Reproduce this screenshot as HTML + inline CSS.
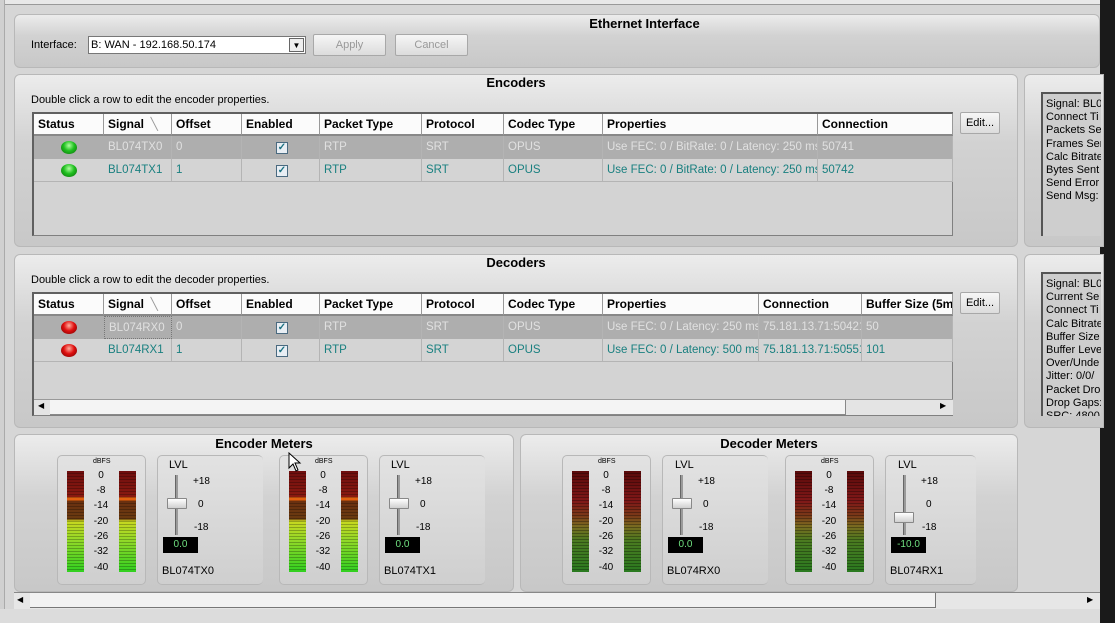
<!DOCTYPE html>
<html><head><meta charset="utf-8"><style>
*{box-sizing:border-box;margin:0;padding:0}
body{width:1115px;height:623px;overflow:hidden;background:#d6d6d6;font-family:"Liberation Sans",sans-serif;font-size:11px;color:#000;position:relative}
.a{position:absolute}
.panel{position:absolute;border:1px solid #b8b8b8;border-radius:6px;background:linear-gradient(#ececec,#d2d2d2 40%,#c8c8c8)}
.title{position:absolute;font-weight:bold;font-size:13px;left:0;right:0;text-align:center}
.btn{position:absolute;border:1px solid #a8a8a8;border-radius:2px;background:linear-gradient(#f6f6f6,#dcdcdc);text-align:center;line-height:20px;font-size:11px}
.tbl{position:absolute;border:1px solid #808080;border-top:2px solid #606060;border-left:2px solid #606060;background:#d3d3d3}
.hd{position:absolute;top:0;height:22px;background:#fbfbfb;border-right:1px solid #999;border-bottom:2px solid #888;font-weight:bold;font-size:12px;line-height:21px;padding-left:4px;white-space:nowrap;overflow:hidden}
.c{position:absolute;height:23px;line-height:22px;padding-left:4px;border-right:1px solid #b4b4b4;white-space:nowrap;overflow:hidden;font-size:11.5px}
.r0{background:#aeaeae;color:#e0e0e0}
.r1{background:#d4d4d4;color:#1a8080;border-bottom:1px solid #b4b4b4}
.led{position:absolute;width:16px;height:13px;border-radius:50%}
.g{background:radial-gradient(circle at 50% 35%,#b0ffa0,#20c020 45%,#0a6a0a)}
.rd{background:radial-gradient(circle at 50% 35%,#ffb0a0,#e01010 45%,#700000)}
.chk{position:absolute;width:12px;height:12px;border:1px solid #4a6a80;background:#e8eef4;color:#1a7080;font-size:10px;line-height:10px;text-align:center;font-weight:bold}
.mbox{position:absolute;border:1px solid #b8b8b8;border-radius:5px;background:linear-gradient(#e2e2e2,#cfcfcf)}
.bar{position:absolute;width:17px;height:101px}
.enc{background:repeating-linear-gradient(#0000 0 2px,rgba(0,0,0,.25) 2px 3px),linear-gradient(#6e0e0e 0,#8a1a10 26px,#e06010 26px,#e06010 30px,#6a3010 30px,#6a3a10 48px,#c8d820 50px,#90d828 70px,#30d020 101px)}
.dec{background:repeating-linear-gradient(#0000 0 2px,rgba(0,0,0,.3) 2px 3px),linear-gradient(#5a0a0a 0,#801818 30px,#7a3a18 45px,#7a6a20 55px,#4a7a20 70px,#2a7a20 101px)}
.sc{position:absolute;font-size:10px;width:30px;text-align:center}
.sm{position:absolute;font-size:10px}
.lv{position:absolute;font-size:11px}
.trk{position:absolute;width:3px;height:60px;background:#9a9a9a;border-left:1px solid #666}
.th{position:absolute;width:20px;height:11px;background:linear-gradient(#fff,#d0d0d0);border:1px solid #888;border-radius:1px}
.disp{position:absolute;width:35px;height:16px;background:#000;color:#6fe07f;font-size:10px;text-align:center;line-height:16px}
.info{position:absolute;width:60px;height:144px;background:#cecece;border-left:2px solid #555;border-top:2px solid #555;font-size:11px;line-height:13.2px;padding:4px 0 0 3px;white-space:nowrap;overflow:hidden}
</style></head><body>
<div class="a" style="left:0;top:0;width:1115px;height:5px;background:#e8e8e8;border-bottom:1px solid #999"></div>
<div class="a" style="left:0;top:0;width:5px;height:623px;background:#d0d0d0;border-right:1px solid #aaa"></div>
<div class="a" style="left:1100px;top:0;width:15px;height:623px;background:#1a1a1a"></div>

<div class="panel" style="left:14px;top:14px;width:1086px;height:54px">
<div class="title" style="top:1px;padding-left:175px">Ethernet Interface</div>
<div class="a" style="left:16px;top:24px">Interface:</div>
<div class="a" style="left:73px;top:21px;width:218px;height:18px;background:#fff;border:1px solid #777;padding-left:2px;line-height:16px">B: WAN - 192.168.50.174</div>
<div class="a" style="left:274px;top:23px;width:15px;height:14px;border:1px solid #666;background:#eee;font-size:8px;text-align:center;line-height:13px">▼</div>
<div class="btn" style="left:298px;top:19px;width:73px;height:22px;color:#999">Apply</div>
<div class="btn" style="left:380px;top:19px;width:73px;height:22px;color:#999">Cancel</div>
</div>

<div class="panel" style="left:14px;top:74px;width:1004px;height:173px">
<div class="title" style="top:0">Encoders</div>
<div class="a" style="left:16px;top:19px">Double click a row to edit the encoder properties.</div>
<div class="btn" style="left:945px;top:37px;width:40px;height:22px">Edit...</div>
</div>
<div class="tbl" style="left:32px;top:112px;width:921px;height:124px">
<div class="hd" style="left:0;width:70px">Status</div><div class="hd" style="left:70px;width:68px">Signal <span style="color:#999;font-weight:normal">&nbsp;╲</span></div><div class="hd" style="left:138px;width:70px">Offset</div><div class="hd" style="left:208px;width:78px">Enabled</div><div class="hd" style="left:286px;width:102px">Packet Type</div><div class="hd" style="left:388px;width:82px">Protocol</div><div class="hd" style="left:470px;width:99px">Codec Type</div><div class="hd" style="left:569px;width:215px">Properties</div><div class="hd" style="left:784px;width:135px">Connection</div>
<div class="a r0" style="left:0;top:22px;width:919px;height:23px"></div>
<div class="a r1" style="left:0;top:45px;width:919px;height:23px"></div>
<div class="led g" style="left:27px;top:27px"></div><div class="led g" style="left:27px;top:50px"></div>
<div class="c r0" style="left:70px;top:22px;width:68px">BL074TX0</div><div class="c r0" style="left:138px;top:22px;width:70px">0</div><div class="c r0" style="left:208px;top:22px;width:78px"></div><div class="c r0" style="left:286px;top:22px;width:102px">RTP</div><div class="c r0" style="left:388px;top:22px;width:82px">SRT</div><div class="c r0" style="left:470px;top:22px;width:99px">OPUS</div><div class="c r0" style="left:569px;top:22px;width:215px">Use FEC: 0 / BitRate: 0 / Latency: 250 ms</div><div class="c r0" style="left:784px;top:22px;width:135px">50741</div>
<div class="c r1" style="left:70px;top:45px;width:68px">BL074TX1</div><div class="c r1" style="left:138px;top:45px;width:70px">1</div><div class="c r1" style="left:208px;top:45px;width:78px"></div><div class="c r1" style="left:286px;top:45px;width:102px">RTP</div><div class="c r1" style="left:388px;top:45px;width:82px">SRT</div><div class="c r1" style="left:470px;top:45px;width:99px">OPUS</div><div class="c r1" style="left:569px;top:45px;width:215px">Use FEC: 0 / BitRate: 0 / Latency: 250 ms</div><div class="c r1" style="left:784px;top:45px;width:135px">50742</div>
<div class="chk" style="left:242px;top:28px">✓</div><div class="chk" style="left:242px;top:51px">✓</div>
</div>
<div class="panel" style="left:1024px;top:74px;width:80px;height:173px;border-radius:6px 0 0 6px"></div>
<div class="info" style="left:1041px;top:92px">Signal: BL0<br>Connect Ti<br>Packets Se<br>Frames Ser<br>Calc Bitrate<br>Bytes Sent<br>Send Error<br>Send Msg:</div>

<div class="panel" style="left:14px;top:254px;width:1004px;height:174px">
<div class="title" style="top:0">Decoders</div>
<div class="a" style="left:16px;top:19px">Double click a row to edit the decoder properties.</div>
<div class="btn" style="left:945px;top:37px;width:40px;height:22px">Edit...</div>
</div>
<div class="tbl" style="left:32px;top:292px;width:921px;height:124px">
<div class="hd" style="left:0;width:70px">Status</div><div class="hd" style="left:70px;width:68px">Signal <span style="color:#999;font-weight:normal">&nbsp;╲</span></div><div class="hd" style="left:138px;width:70px">Offset</div><div class="hd" style="left:208px;width:78px">Enabled</div><div class="hd" style="left:286px;width:102px">Packet Type</div><div class="hd" style="left:388px;width:82px">Protocol</div><div class="hd" style="left:470px;width:99px">Codec Type</div><div class="hd" style="left:569px;width:156px">Properties</div><div class="hd" style="left:725px;width:103px">Connection</div><div class="hd" style="left:828px;width:91px">Buffer Size (5ms)</div>
<div class="a r0" style="left:0;top:22px;width:919px;height:23px"></div>
<div class="a r1" style="left:0;top:45px;width:919px;height:23px"></div>
<div class="led rd" style="left:27px;top:27px"></div><div class="led rd" style="left:27px;top:50px"></div>
<div class="c r0" style="left:70px;top:22px;width:68px;border:1px dotted #777">BL074RX0</div><div class="c r0" style="left:138px;top:22px;width:70px">0</div><div class="c r0" style="left:208px;top:22px;width:78px"></div><div class="c r0" style="left:286px;top:22px;width:102px">RTP</div><div class="c r0" style="left:388px;top:22px;width:82px">SRT</div><div class="c r0" style="left:470px;top:22px;width:99px">OPUS</div><div class="c r0" style="left:569px;top:22px;width:156px">Use FEC: 0 / Latency: 250 ms</div><div class="c r0" style="left:725px;top:22px;width:103px">75.181.13.71:50421</div><div class="c r0" style="left:828px;top:22px;width:91px">50</div>
<div class="c r1" style="left:70px;top:45px;width:68px">BL074RX1</div><div class="c r1" style="left:138px;top:45px;width:70px">1</div><div class="c r1" style="left:208px;top:45px;width:78px"></div><div class="c r1" style="left:286px;top:45px;width:102px">RTP</div><div class="c r1" style="left:388px;top:45px;width:82px">SRT</div><div class="c r1" style="left:470px;top:45px;width:99px">OPUS</div><div class="c r1" style="left:569px;top:45px;width:156px">Use FEC: 0 / Latency: 500 ms</div><div class="c r1" style="left:725px;top:45px;width:103px">75.181.13.71:50551</div><div class="c r1" style="left:828px;top:45px;width:91px">101</div>
<div class="chk" style="left:242px;top:28px">✓</div><div class="chk" style="left:242px;top:51px">✓</div>
<div class="a" style="left:0;top:105px;width:919px;height:16px;background:#e4e4e4;border-top:1px solid #999"></div>
<div class="a" style="left:16px;top:106px;width:796px;height:15px;background:#f4f4f4;border-right:1px solid #888;border-bottom:1px solid #888"></div>
<div class="a" style="left:4px;top:107px;font-size:8px">◀</div><div class="a" style="left:906px;top:107px;font-size:8px">▶</div>
</div>
<div class="panel" style="left:1024px;top:254px;width:80px;height:174px;border-radius:6px 0 0 6px"></div>
<div class="info" style="left:1041px;top:272px">Signal: BL0<br>Current Se<br>Connect Ti<br>Calc Bitrate<br>Buffer Size<br>Buffer Leve<br>Over/Unde<br>Jitter: 0/0/<br>Packet Dro<br>Drop Gaps:<br>SRC: 4800</div>

<div class="panel" style="left:14px;top:434px;width:500px;height:158px"><div class="title" style="top:1px">Encoder Meters</div></div>
<div class="panel" style="left:520px;top:434px;width:498px;height:158px"><div class="title" style="top:1px">Decoder Meters</div></div>

<div class="mbox" style="left:57px;top:455px;width:89px;height:130px"></div>
<div class="bar enc" style="left:67px;top:471px"></div><div class="bar enc" style="left:119px;top:471px"></div>
<div class="sm" style="left:93px;top:458px;font-size:7px">dBFS</div>
<div class="sc" style="left:86px;top:470px">0</div><div class="sc" style="left:86px;top:485px">-8</div><div class="sc" style="left:86px;top:500px">-14</div><div class="sc" style="left:86px;top:516px">-20</div><div class="sc" style="left:86px;top:531px">-26</div><div class="sc" style="left:86px;top:546px">-32</div><div class="sc" style="left:86px;top:562px">-40</div>
<div class="mbox" style="left:157px;top:455px;width:106px;height:130px;border-right:none"></div>
<div class="lv" style="left:169px;top:459px">LVL</div>
<div class="trk" style="left:175px;top:475px"></div><div class="th" style="left:167px;top:498px"></div>
<div class="sm" style="left:193px;top:476px">+18</div><div class="sm" style="left:198px;top:499px">0</div><div class="sm" style="left:194px;top:522px">-18</div>
<div class="disp" style="left:163px;top:537px">0.0</div>
<div class="lv" style="left:162px;top:565px">BL074TX0</div>

<div class="mbox" style="left:279px;top:455px;width:89px;height:130px"></div>
<div class="bar enc" style="left:289px;top:471px"></div><div class="bar enc" style="left:341px;top:471px"></div>
<div class="sm" style="left:315px;top:458px;font-size:7px">dBFS</div>
<div class="sc" style="left:308px;top:470px">0</div><div class="sc" style="left:308px;top:485px">-8</div><div class="sc" style="left:308px;top:500px">-14</div><div class="sc" style="left:308px;top:516px">-20</div><div class="sc" style="left:308px;top:531px">-26</div><div class="sc" style="left:308px;top:546px">-32</div><div class="sc" style="left:308px;top:562px">-40</div>
<div class="mbox" style="left:379px;top:455px;width:106px;height:130px;border-right:none"></div>
<div class="lv" style="left:391px;top:459px">LVL</div>
<div class="trk" style="left:397px;top:475px"></div><div class="th" style="left:389px;top:498px"></div>
<div class="sm" style="left:415px;top:476px">+18</div><div class="sm" style="left:420px;top:499px">0</div><div class="sm" style="left:416px;top:522px">-18</div>
<div class="disp" style="left:385px;top:537px">0.0</div>
<div class="lv" style="left:384px;top:565px">BL074TX1</div>

<div class="mbox" style="left:562px;top:455px;width:89px;height:130px"></div>
<div class="bar dec" style="left:572px;top:471px"></div><div class="bar dec" style="left:624px;top:471px"></div>
<div class="sm" style="left:598px;top:458px;font-size:7px">dBFS</div>
<div class="sc" style="left:591px;top:470px">0</div><div class="sc" style="left:591px;top:485px">-8</div><div class="sc" style="left:591px;top:500px">-14</div><div class="sc" style="left:591px;top:516px">-20</div><div class="sc" style="left:591px;top:531px">-26</div><div class="sc" style="left:591px;top:546px">-32</div><div class="sc" style="left:591px;top:562px">-40</div>
<div class="mbox" style="left:662px;top:455px;width:106px;height:130px;border-right:none"></div>
<div class="lv" style="left:675px;top:459px">LVL</div>
<div class="trk" style="left:680px;top:475px"></div><div class="th" style="left:672px;top:498px"></div>
<div class="sm" style="left:698px;top:476px">+18</div><div class="sm" style="left:703px;top:499px">0</div><div class="sm" style="left:699px;top:522px">-18</div>
<div class="disp" style="left:668px;top:537px">0.0</div>
<div class="lv" style="left:667px;top:565px">BL074RX0</div>

<div class="mbox" style="left:785px;top:455px;width:89px;height:130px"></div>
<div class="bar dec" style="left:795px;top:471px"></div><div class="bar dec" style="left:847px;top:471px"></div>
<div class="sm" style="left:821px;top:458px;font-size:7px">dBFS</div>
<div class="sc" style="left:814px;top:470px">0</div><div class="sc" style="left:814px;top:485px">-8</div><div class="sc" style="left:814px;top:500px">-14</div><div class="sc" style="left:814px;top:516px">-20</div><div class="sc" style="left:814px;top:531px">-26</div><div class="sc" style="left:814px;top:546px">-32</div><div class="sc" style="left:814px;top:562px">-40</div>
<div class="mbox" style="left:885px;top:455px;width:91px;height:130px;border-right:none"></div>
<div class="lv" style="left:898px;top:459px">LVL</div>
<div class="trk" style="left:903px;top:475px"></div><div class="th" style="left:894px;top:512px"></div>
<div class="sm" style="left:921px;top:476px">+18</div><div class="sm" style="left:926px;top:499px">0</div><div class="sm" style="left:922px;top:522px">-18</div>
<div class="disp" style="left:891px;top:537px">-10.0</div>
<div class="lv" style="left:890px;top:565px">BL074RX1</div>

<svg class="a" style="left:288px;top:452px" width="14" height="20"><path d="M1 1 L1 16 L5 12 L8 19 L10 18 L7 11 L12 11 Z" fill="#fff" stroke="#000" stroke-width="1"/></svg>

<div class="a" style="left:14px;top:592px;width:1086px;height:17px;background:#e6e6e6;border-top:1px solid #888"></div>
<div class="a" style="left:30px;top:593px;width:906px;height:15px;background:#f2f2f2;border-right:1px solid #777;border-bottom:1px solid #777"></div>
<div class="a" style="left:17px;top:595px;font-size:8px">◀</div><div class="a" style="left:1087px;top:595px;font-size:8px">▶</div>
<div class="a" style="left:0;top:609px;width:1100px;height:14px;background:#dcdcdc"></div>
</body></html>
